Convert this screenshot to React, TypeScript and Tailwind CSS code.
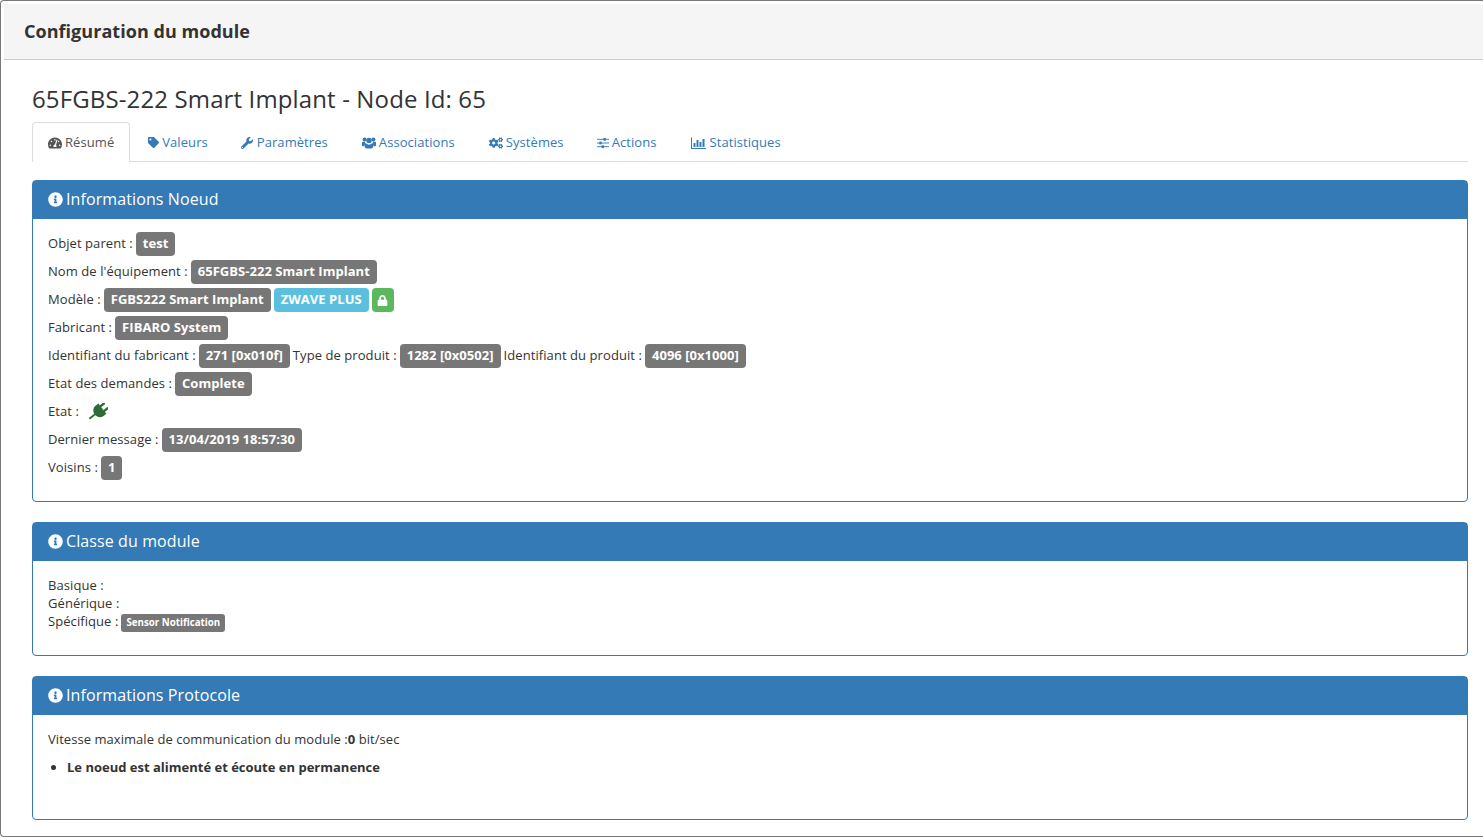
import React from "react";
import {
  FaTachometerAlt,
  FaTag,
  FaWrench,
  FaCogs,
  FaInfoCircle,
  FaLock,
} from "react-icons/fa";

const UsersIcon = () => (
  <svg width="14" height="12" viewBox="0 0 14 12" fill="currentColor">
    <circle cx="2.6" cy="2.6" r="2" />
    <circle cx="11.4" cy="2.6" r="2" />
    <circle cx="7" cy="3.4" r="2.7" />
    <path d="M0 5.6c0-.5.3-.8.8-.8h2.1c.1 1 .5 1.8 1.2 2.4C3 7.5 2.3 8.3 2.2 9.2H1C.4 9.2 0 8.8 0 8.2zM14 5.6c0-.5-.3-.8-.8-.8h-2.1c-.1 1-.5 1.8-1.2 2.4 1.100.3 1.800 1.100 1.900 2h1.200c.6 0 1-.4 1-1z" />
    <path d="M4.200 6.600c.7.7 1.700 1.100 2.800 1.100s2.100-.4 2.800-1.100c1 .2 1.500 1.200 1.500 2.400 0 1.300-.7 2.500-2 2.500H4.700c-1.300 0-2-1.200-2-2.500 0-1.200.5-2.200 1.500-2.400z" />
  </svg>
);

const SlidersIcon = () => (
  <svg width="12" height="12" viewBox="0 0 13 12" fill="currentColor">
    <rect x="0" y="1.5" width="13" height="1" />
    <rect x="0" y="5.5" width="13" height="1" />
    <rect x="0" y="9.500" width="13" height="1" />
    <rect x="7" y="0.500" width="2.500" height="3" />
    <rect x="2.500" y="4.500" width="2.500" height="3" />
    <rect x="5" y="8.500" width="2.500" height="3" />
  </svg>
);

const BarsIcon = () => (
  <svg width="15" height="12" viewBox="0 0 15 12" fill="currentColor">
    <rect x="0" y="0.500" width="1" height="11.500" />
    <rect x="0" y="11" width="15" height="1" />
    <rect x="2.500" y="6" width="2" height="4" />
    <rect x="5.500" y="3" width="2" height="7" />
    <rect x="8.500" y="5" width="2" height="5" />
    <rect x="11.500" y="2" width="2" height="8" />
  </svg>
);

const PlugIcon = () => (
  <svg width="20" height="18" viewBox="0 0 20 18" fill="#2f6b36" className="ml-[6px]">
    <g transform="rotate(52 10 9)">
      <rect x="5.800" y="-1.800" width="2.400" height="6" rx="0.500" />
      <rect x="11.800" y="-1.800" width="2.400" height="6" rx="0.500" />
      <path d="M3.500 3.500h13v3.500c0 3.400-2.700 6-6.500 6s-6.500-2.600-6.500-6z" />
      <rect x="9.100" y="11" width="1.800" height="9" />
    </g>
  </svg>
);

const TABS = [
  { label: "Valeurs", box: "ml-[1px] w-[14px]", pad: "pr-[16px]", icon: <FaTag className="text-[11px]" /> },
  { label: "Paramètres", box: "w-[16px]", pad: "pr-[17px]", icon: <FaWrench className="text-[12px]" /> },
  { label: "Associations", box: "w-[17px]", pad: "pr-[17px]", icon: <UsersIcon /> },
  { label: "Systèmes", box: "w-[17px]", pad: "pr-[16px]", icon: <FaCogs className="text-[14px]" /> },
  { label: "Actions", box: "w-[15px]", pad: "pr-[18px]", icon: <SlidersIcon /> },
  { label: "Statistiques", box: "w-[18px]", pad: "pr-[17px]", icon: <BarsIcon /> },
];

const Badge = ({ children, color = "bg-[#777777]" }: { children: React.ReactNode; color?: string }) => (
  <span className={`inline-flex h-6 items-center rounded-[4px] px-[7px] text-[13px] font-bold tracking-[0.04px] text-white ${color}`}>
    {children}
  </span>
);

const Row = ({ children }: { children: React.ReactNode }) => (
  <div className="flex h-7 items-center gap-[3px] whitespace-nowrap">{children}</div>
);

const Panel = ({
  title,
  className,
  children,
}: {
  title: string;
  className: string;
  children: React.ReactNode;
}) => (
  <section className={`rounded-[4px] border border-[#337ab7] ${className}`}>
    <div className="flex h-[38px] items-center gap-[3px] bg-[#337ab7] px-[15px] pb-[2px] text-[16px] tracking-[0.1px] text-white">
      <FaInfoCircle className="text-[15px]" />
      <span>{title}</span>
    </div>
    {children}
  </section>
);

export default function App() {
  return (
    <div className="h-[837px] overflow-hidden bg-white font-['Open_Sans',sans-serif] text-[13px] tracking-[0.07px] text-[#333333]">
      <div className="h-full rounded-l-[4px] border border-r-0 border-[#777777] pl-[3px] pt-[3px]">
        <div className="flex h-[56px] items-center border-b border-[#cccccc] bg-[#f5f5f5] px-5 text-[18px] font-bold tracking-[0.04px]">
          Configuration du module
        </div>

        <div className="pl-7 pr-[15px]">
          <h3 className="mt-[21px] h-[41px] text-[24px] leading-[36px] tracking-[0.13px]">
            65FGBS-222 Smart Implant - Node Id: 65
          </h3>

          <div className="flex h-10 border-b border-[#dddddd]">
            <div className="flex h-10 items-center gap-[3px] rounded-t-[4px] border border-b-0 border-[#dddddd] bg-white px-[15px] text-[#555555]">
              <FaTachometerAlt className="text-[14px]" />
              Résumé
            </div>
            {TABS.map((tab) => (
              <div key={tab.label} className={`flex h-[39px] items-center pl-[17px] pt-[2px] text-[#337ab7] ${tab.pad}`}>
                <span className={`flex shrink-0 ${tab.box}`}>{tab.icon}</span>
                {tab.label}
              </div>
            ))}
          </div>

          <Panel title="Informations Noeud" className="mt-[18px] h-[322px]">
            <div className="px-[15px] pt-[11px]">
              <Row>
                Objet parent : <Badge>test</Badge>
              </Row>
              <Row>
                Nom de l'équipement : <Badge>65FGBS-222 Smart Implant</Badge>
              </Row>
              <Row>
                Modèle : <Badge>FGBS222 Smart Implant</Badge>
                <Badge color="bg-[#5bc0de]">ZWAVE PLUS</Badge>
                <Badge color="bg-[#5cb85c]">
                  <span className="flex w-2 justify-center">
                    <FaLock className="shrink-0 text-[11px]" />
                  </span>
                </Badge>
              </Row>
              <Row>
                Fabricant : <Badge>FIBARO System</Badge>
              </Row>
              <Row>
                Identifiant du fabricant : <Badge>271 [0x010f]</Badge>
                Type de produit : <Badge>1282 [0x0502]</Badge>
                Identifiant du produit : <Badge>4096 [0x1000]</Badge>
              </Row>
              <Row>
                Etat des demandes : <Badge>Complete</Badge>
              </Row>
              <Row>
                Etat :
                <PlugIcon />
              </Row>
              <Row>
                Dernier message : <Badge>13/04/2019 18:57:30</Badge>
              </Row>
              <Row>
                Voisins : <Badge>1</Badge>
              </Row>
            </div>
          </Panel>

          <Panel title="Classe du module" className="mt-5 h-[134px]">
            <div className="px-[15px] pt-[15px] leading-[18px]">
              <div>Basique :</div>
              <div>Générique :</div>
              <div className="flex items-start gap-[3px]">
                Spécifique :
                <span className="mt-[2px] inline-flex h-[18px] items-center rounded-[3px] bg-[#777777] px-[5px] text-[9.75px] font-bold tracking-normal text-white">
                  Sensor Notification
                </span>
              </div>
            </div>
          </Panel>

          <Panel title="Informations Protocole" className="mt-5 h-[144px]">
            <div className="px-[15px] pt-[15px]">
              <div className="h-[18px] leading-[18px] tracking-[0.05px]">
                Vitesse maximale de communication du module :<b>0</b> bit/sec
              </div>
              <ul className="mt-[10px] list-disc pl-[19px] leading-[18px] tracking-normal">
                <li className="font-bold">Le noeud est alimenté et écoute en permanence</li>
              </ul>
            </div>
          </Panel>
        </div>
      </div>
    </div>
  );
}
